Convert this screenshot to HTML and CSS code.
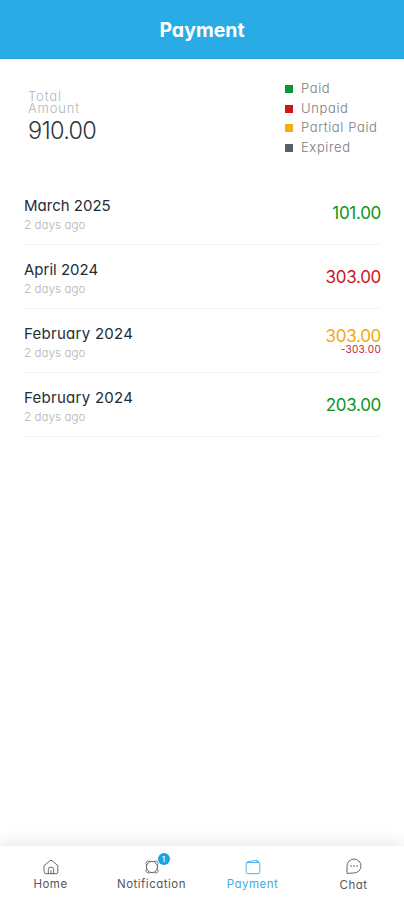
FILE: index.html
```html
<!DOCTYPE html>
<html lang="en">
<head>
<meta charset="utf-8">
<meta name="viewport" content="width=device-width, initial-scale=1">
<title>Payment</title>
<link rel="stylesheet" href="styles.css">
</head>
<body>
<div class="app">
  <header class="header"><h1>Payment</h1></header>
  <main class="content">
    <section class="summary">
      <div class="total">
        <div class="total-label">Total<br>Amount</div>
        <div class="total-value">910.00</div>
      </div>
      <ul class="legend">
        <li><i class="swatch s-paid"></i><span>Paid</span></li>
        <li><i class="swatch s-unpaid"></i><span>Unpaid</span></li>
        <li><i class="swatch s-partial"></i><span>Partial Paid</span></li>
        <li><i class="swatch s-expired"></i><span>Expired</span></li>
      </ul>
    </section>
    <section class="list">
      <article class="row">
        <div><h2>March 2025</h2><p>2 days ago</p></div>
        <div class="amount paid">101.00</div>
      </article>
      <article class="row">
        <div><h2>April 2024</h2><p>2 days ago</p></div>
        <div class="amount unpaid">303.00</div>
      </article>
      <article class="row">
        <div><h2 class="wide">February 2024</h2><p>2 days ago</p></div>
        <div class="amount partial">303.00<small>-303.00</small></div>
      </article>
      <article class="row">
        <div><h2 class="wide">February 2024</h2><p>2 days ago</p></div>
        <div class="amount paid">203.00</div>
      </article>
    </section>
  </main>
  <nav class="tabs">
    <a class="tab">
      <svg class="icon" viewBox="0 0 16 16"><path d="M1.2 6.600 6.800 1.800Q8 .9 9.200 1.800L14.800 6.600V13Q14.800 14.700 13.100 14.700H2.900Q1.200 14.700 1.200 13Z"/><path d="M5.300 14.600V10.800a2.700 2.700 0 0 1 5.400 0v3.800M8 11.500v3"/></svg>
      <span>Home</span>
    </a>
    <a class="tab">
      <span class="icon-wrap">
        <svg class="icon" viewBox="0 0 16 16"><circle cx="8" cy="8" r="5.600"/><path class="knots" d="M5.500 2.300 3.300 1.900 1.700 4.300 2.700 6M10.500 2.300l2.200-.4 1.600 2.400-1 1.700M2.700 10l-1 1.700 1.600 2.400 2.200-.4M13.300 10l1 1.700-1.600 2.400-2.200-.4"/></svg>
        <b class="badge">1</b>
      </span>
      <span>Notification</span>
    </a>
    <a class="tab active">
      <svg class="icon" viewBox="0 0 16 16"><rect x="1.200" y="3.500" width="13.600" height="11.200" rx="1.600"/><path d="M1.300 4.700Q1.500 2.800 3.400 2.500L10.500 1.500Q12.500 1.300 12.600 3.400M10.500 1.600h1.700q1.700 0 1.700 2"/></svg>
      <span>Payment</span>
    </a>
    <a class="tab chat">
      <svg class="icon" viewBox="0 0 16 16"><path d="M1 15V8a7 7 0 1 1 7 7Z"/><path class="dots" d="M4.900 8h.1M8 8h.1M11.100 8h.1"/></svg>
      <span>Chat</span>
    </a>
  </nav>
</div>
</body>
</html>
```
FILE: styles.css
```css
* { box-sizing: border-box; margin: 0; padding: 0; }
body { background: #fff; font-family: Inter, "Liberation Sans", sans-serif; font-feature-settings: "cv11" 1; color: #242b38; }
.app { height: 900px; display: flex; flex-direction: column; overflow: hidden; }
.header { height: 59px; background: #29abe5; border-bottom: 1px solid #20a2dd; display: flex; align-items: center; justify-content: center; flex: none; }
.header h1 { font-size: 19.500px; line-height: 24px; font-weight: 700; color: #fff; padding-top: 1px; }
.content { flex: 1; padding: 0 23px 0 24px; }
.summary { display: flex; justify-content: space-between; height: 122px; padding: 19px 0 0 4px; }
.total { padding-top: 12px; }
.total-label { font-size: 13px; line-height: 12px; font-weight: 300; color: #b3b6ba; letter-spacing: .85px; }
.total-value { font-size: 23.500px; line-height: 28px; font-weight: 300; color: #30343b; padding-top: 3px; letter-spacing: -0.700px; }
.legend { list-style: none; width: 96px; padding-top: .5px; font-size: 13px; font-weight: 300; color: #777b80; }
.legend li { display: flex; align-items: center; gap: 8px; height: 19.600px; white-space: nowrap; letter-spacing: .63px; }
.swatch { width: 8px; height: 8px; flex: none; margin-top: 2px; }
.s-paid { background: #069b32; }
.s-unpaid { background: #cf1420; }
.s-partial { background: #f4ae0b; }
.s-expired { background: #56606c; }
.row { display: flex; justify-content: space-between; align-items: center; height: 64.100px; border-bottom: 1px solid #f4f4f5; }
.row h2 { font-size: 15px; line-height: 20px; font-weight: 400; padding-top: 3px; margin-bottom: 1px; }
.row h2.wide { letter-spacing: .28px; }
.row p { font-size: 11.500px; line-height: 16px; font-weight: 300; color: #b2b5b9; letter-spacing: .1px; }
.amount { font-size: 17px; line-height: 18px; font-weight: 400; text-align: right; letter-spacing: -0.300px; padding-top: 1px; }
.amount small { display: block; font-size: 10px; line-height: 12px; margin-top: -2px; color: #c31c38; letter-spacing: .3px; }
.paid { color: #0b9420; }
.unpaid { color: #cd151c; }
.partial { color: #f1a90e; padding-top: 0; }
.tabs { height: 54px; flex: none; display: grid; grid-template-columns: repeat(4, 1fr); background: #fff; box-shadow: 0 -3px 16px rgba(0, 0, 0, .1); }
.tab { display: flex; flex-direction: column; align-items: center; padding-top: 13px; font-size: 11.500px; line-height: 18px; color: #54575c; letter-spacing: .5px; }
.tab.active { color: #40abe7; }
.tab.chat { padding-top: 12px; }
.tab.chat span { padding-top: 2px; }
.icon { display: block; width: 16px; height: 16px; fill: none; stroke: currentColor; stroke-width: .9; stroke-linecap: round; stroke-linejoin: round; }
.knots { stroke-width: .8; }
.dots { stroke-width: 1.500; }
.icon-wrap { position: relative; }
.badge { position: absolute; left: 14px; top: -6px; width: 12px; height: 12px; border-radius: 50%; background: #16a5df; color: #fff; font-size: 8px; line-height: 12px; font-weight: 500; text-align: center; letter-spacing: 0; }
```
